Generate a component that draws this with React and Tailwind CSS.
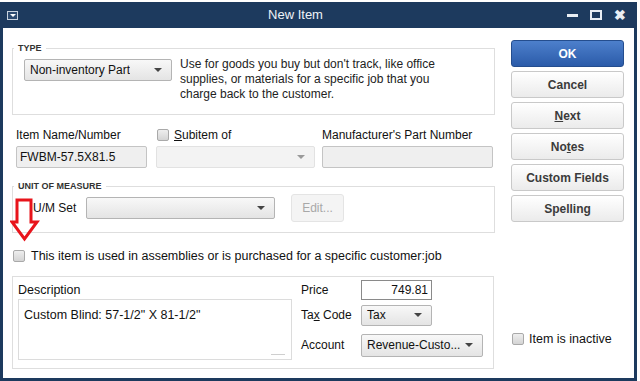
import React from 'react'

const Caret = ({ light }) => (
    <span className={`block h-0 w-0 border-x-[4px] border-t-[4px] border-x-transparent ${light ? 'border-t-[#9a9a9a]' : 'border-t-[#444]'}`} />
)

function Dropdown({ text, className = '', disabled }) {
    return (
        <div className={`flex items-center justify-between rounded-[2px] border pl-[5px] pr-[9px] ${disabled ? 'border-[#e2e2e2] bg-[#f3f3f3]' : 'border-[#b4b4b4] bg-linear-to-b from-[#f8f8f8] to-[#e4e4e4]'} ${className}`}>
            <span className="truncate text-[12px] text-[#111]">{text}</span>
            <Caret light={disabled} />
        </div>
    )
}

function Check() {
    return <span className="block h-[12px] w-[12px] shrink-0 rounded-[2px] border border-[#a9a9a9] bg-linear-to-b from-[#eeeeee] to-[#d4d4d4]" />
}

function SideButton({ children, primary }) {
    return (
        <button className={`flex h-[27px] w-[113px] items-center justify-center rounded-[3px] border text-[12px] font-bold ${primary ? 'border-[#244d8e] bg-linear-to-b from-[#4d80cc] to-[#2b5ba9] text-white' : 'border-[#c9c9c9] bg-linear-to-b from-white to-[#ebebeb] text-[#3b3b3b]'}`}>
            {children}
        </button>
    )
}

export default function App() {
    return (
        <div className="relative h-[381px] w-[640px] overflow-hidden bg-white font-['Liberation_Sans',Arial,sans-serif] text-[#111]">
            <div className="mt-[2px] flex h-[379px] w-[637px] flex-col bg-[#1d3a5e] px-[3px] pb-[3px]">
                {/* title bar */}
                <div className="flex h-[26px] shrink-0 items-center">
                    <div className="ml-[4px] flex h-[9px] w-[11px] items-center justify-center border border-[#c8d2de] bg-[#2c4a70]">
                        <span className="block h-0 w-0 border-x-[3px] border-t-[3px] border-x-transparent border-t-white" />
                    </div>
                    <div className="flex-1 pl-[6px] text-center text-[13px] text-[#eef2f7]">New Item</div>
                    <div className="flex items-center gap-[12px] pr-[8px]">
                        <span className="block h-[3px] w-[11px] bg-[#e8edf3]" />
                        <span className="block h-[10px] w-[12px] border-2 border-[#e8edf3]" />
                        <span className="text-[14px] font-bold leading-none text-[#e8edf3]">✖</span>
                    </div>
                </div>

                {/* body */}
                <div className="flex flex-1 bg-white">
                    <div className="w-[492px] pl-[9px]">
                        <fieldset className="mt-[14px] w-[483px] border border-[#dedede]">
                            <legend className="ml-[1px] px-[4px] text-[9px] font-bold leading-[12px] text-[#333]">TYPE</legend>
                            <div className="flex items-start pb-[12px] pl-[11px]">
                                <Dropdown text="Non-inventory Part" className="mt-[5px] h-[22px] w-[148px]" />
                                <p className="ml-[8px] mt-[3px] text-[12px] leading-[15px] text-[#222]">
                                    Use for goods you buy but don't track, like office<br />
                                    supplies, or materials for a specific job that you<br />
                                    charge back to the customer.
                                </p>
                            </div>
                        </fieldset>

                        <div className="mt-[13px] flex items-start">
                            <div className="ml-[4px] w-[131px]">
                                <div className="h-[14px] text-[12px] leading-[14px]">Item Name/Number</div>
                                <div className="mt-[4px] flex h-[22px] items-center rounded-[2px] border border-[#c4c4c4] bg-[#efefef] px-[3px] text-[12px]">FWBM-57.5X81.5</div>
                            </div>
                            <div className="ml-[9px] w-[159px]">
                                <div className="flex h-[14px] items-center gap-[5px] pl-[1px] text-[12px] leading-[14px]">
                                    <Check />
                                    <span><u>S</u>ubitem of</span>
                                </div>
                                <Dropdown disabled className="mt-[4px] h-[22px] w-[159px]" />
                            </div>
                            <div className="ml-[7px] w-[171px]">
                                <div className="h-[14px] text-[12px] leading-[14px]">Manufacturer's Part Number</div>
                                <div className="mt-[4px] h-[22px] rounded-[2px] border border-[#c4c4c4] bg-[#efefef]" />
                            </div>
                        </div>

                        <fieldset className="mt-[12px] w-[483px] border border-[#dedede]">
                            <legend className="ml-[1px] px-[4px] text-[9px] font-bold leading-[12px] text-[#333]">UNIT OF MEASURE</legend>
                            <div className="flex items-center pb-[10px] pl-[20px] pt-[2px]">
                                <span className="w-[53px] text-[12px]">U/M Set</span>
                                <Dropdown className="h-[22px] w-[189px]" />
                                <div className="ml-[16px] flex h-[28px] w-[53px] items-center justify-center rounded-[3px] border border-[#e4e4e4] bg-[#f4f4f4] text-[12px] text-[#a8a8a8]">Edit...</div>
                            </div>
                        </fieldset>

                        <div className="mt-[14px] flex items-center gap-[6px] pl-[1px] text-[12.5px]">
                            <Check />
                            <span>This item is used in assemblies or is purchased for a specific customer:job</span>
                        </div>

                        <div className="mt-[10px] flex h-[93px] w-[482px] border border-[#dedede]">
                            <div className="pl-[5px] pt-[6px]">
                                <div className="h-[14px] text-[12.5px] leading-[14px]">Description</div>
                                <div className="relative mt-[2px] h-[61px] w-[274px] border border-[#dcdcdc] px-[5px] pt-[6px] text-[12.5px]">
                                    Custom Blind: 57-1/2" X 81-1/2"
                                    <span className="absolute bottom-[4px] right-[6px] block h-[1px] w-[14px] bg-[#cfcfcf]" />
                                </div>
                            </div>
                            <div className="ml-[9px] flex flex-col pt-[3px] text-[12px]">
                                <div className="flex h-[20px] items-center">
                                    <span className="w-[60px]">Price</span>
                                    <div className="flex h-[20px] w-[71px] items-center justify-end border border-[#8a8a8a] pr-[3px]">749.81</div>
                                </div>
                                <div className="mt-[5px] flex h-[21px] items-center">
                                    <span className="w-[60px]">Ta<u>x</u> Code</span>
                                    <Dropdown text="Tax" className="h-[21px] w-[71px]" />
                                </div>
                                <div className="mt-[8px] flex h-[23px] items-center">
                                    <span className="w-[60px]">Account</span>
                                    <Dropdown text="Revenue-Custo..." className="h-[23px] w-[122px]" />
                                </div>
                            </div>
                        </div>
                    </div>

                    <div className="ml-[16px] flex flex-col pt-[12px]">
                        <div className="flex flex-col gap-[4px]">
                            <SideButton primary>OK</SideButton>
                            <SideButton>Cancel</SideButton>
                            <SideButton><span><u>N</u>ext</span></SideButton>
                            <SideButton><span>No<u>t</u>es</span></SideButton>
                            <SideButton>Custom Fields</SideButton>
                            <SideButton><span>Spellin<u>g</u></span></SideButton>
                        </div>
                        <div className="mt-[108px] flex items-center gap-[5px] pl-[1px] text-[12.5px]">
                            <Check />
                            <span>Item is inactive</span>
                        </div>
                    </div>
                </div>
            </div>

            {/* red annotation arrow */}
            <svg className="absolute left-[10px] top-[198px]" width="30" height="44" viewBox="0 0 30 44">
                <path d="M7 2 H21 V24 H27 L14.5 41 L2 24 H7 Z" fill="none" stroke="#e8141b" strokeWidth="3" strokeLinejoin="miter" />
            </svg>
        </div>
    )
}
